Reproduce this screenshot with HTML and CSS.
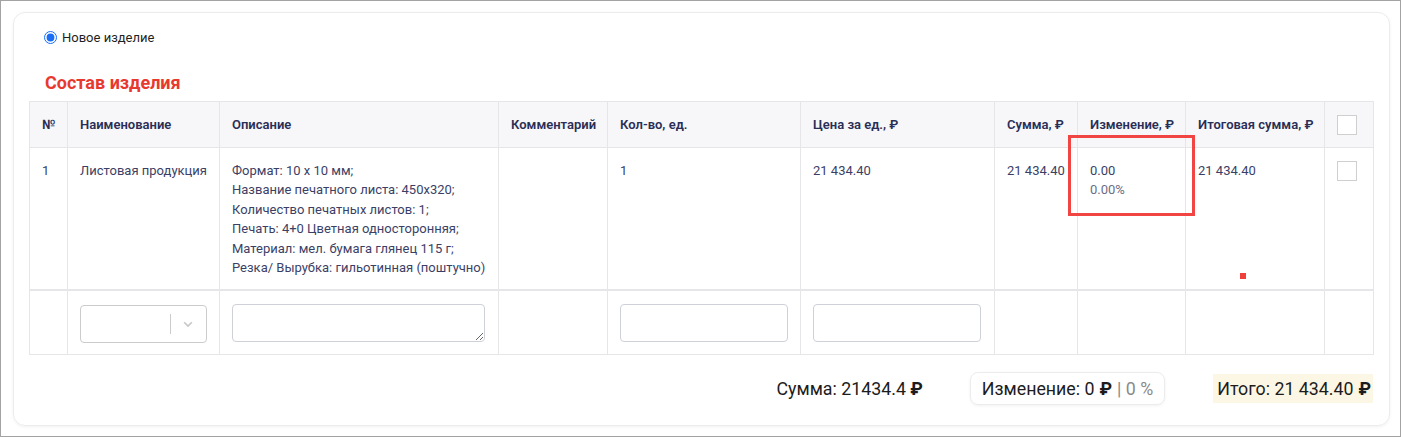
FILE: index.html
```html
<!DOCTYPE html>
<html lang="ru">
<head>
<meta charset="utf-8">
<title>Состав изделия</title>
<link rel="stylesheet" href="styles.css">
</head>
<body>
<div class="frame">
  <div class="card">
    <label class="radio-row"><input type="radio" name="kind" checked> <span>Новое изделие</span></label>
    <h2 class="title">Состав изделия</h2>
    <div class="table-wrap">
      <table class="items">
        <colgroup>
          <col class="c-num"><col class="c-name"><col class="c-desc"><col class="c-comment"><col class="c-qty"><col class="c-price"><col class="c-sum"><col class="c-change"><col class="c-total"><col class="c-check">
        </colgroup>
        <thead>
          <tr>
            <th>№</th>
            <th>Наименование</th>
            <th>Описание</th>
            <th>Комментарий</th>
            <th>Кол-во, ед.</th>
            <th>Цена за ед., ₽</th>
            <th>Сумма, ₽</th>
            <th>Изменение, ₽</th>
            <th>Итоговая сумма, ₽</th>
            <th><span class="checkbox"></span></th>
          </tr>
        </thead>
        <tbody>
          <tr class="data-row">
            <td>1</td>
            <td>Листовая продукция</td>
            <td class="desc">Формат: 10 х 10 мм;<br>Название печатного листа: 450x320;<br>Количество печатных листов: 1;<br>Печать: 4+0 Цветная односторонняя;<br>Материал: мел. бумага глянец 115 г;<br>Резка/ Вырубка: гильотинная (поштучно)</td>
            <td></td>
            <td>1</td>
            <td>21 434.40</td>
            <td>21 434.40</td>
            <td class="change"><div>0.00</div><div class="pct">0.00%</div></td>
            <td class="total-cell">21 434.40<span class="dot"></span></td>
            <td><span class="checkbox"></span></td>
          </tr>
          <tr class="input-row">
            <td></td>
            <td>
              <div class="select">
                <span class="select-value"></span>
                <span class="select-sep"></span>
                <svg class="chev" width="14" height="14" viewBox="0 0 20 20"><path d="M4.5 7.5 L10 13 L15.5 7.5" fill="none" stroke="#c8c8c8" stroke-width="2.4"/></svg>
              </div>
            </td>
            <td><textarea class="area"></textarea></td>
            <td></td>
            <td><input class="field" type="text"></td>
            <td><input class="field" type="text"></td>
            <td></td>
            <td></td>
            <td></td>
            <td></td>
          </tr>
        </tbody>
      </table>
      <div class="highlight"></div>
    </div>
    <div class="footer">
      <div class="sum">Сумма: 21434.4 <b>₽</b></div>
      <div class="chip">Изменение: 0 <b>₽</b> <span class="muted">| 0 %</span></div>
      <div class="grand">Итого: 21 434.40 <b>₽</b></div>
    </div>
  </div>
</div>
</body>
</html>
```
FILE: styles.css
```css
* { box-sizing: border-box; }
html, body { margin: 0; padding: 0; background: #fff; }
body { font-family: Roboto, "Noto Sans", Arial, sans-serif; }
.frame {
  width: 1401px; height: 437px;
  border: 1px solid #a3a3a3;
  background: #fff;
  padding: 11px 10px 0 12px;
}
.card {
  height: 414px;
  border: 1px solid #ececec;
  border-radius: 12px;
  box-shadow: 0 1px 3px rgba(0,0,0,0.06);
  padding: 15px 15px 0 15px;
}
.radio-row {
  display: flex; align-items: center; gap: 5px;
  font-size: 13px; color: #1f1f1f;
  padding-left: 15px;
  height: 19px;
}
.radio-row input { margin: 0; width: 13px; height: 13px; accent-color: #1a6ef5; }
.title {
  margin: 24px 0 0 16px;
  font-size: 18px; font-weight: 700; color: #e8392f;
  line-height: 24px; height: 24px;
}
.table-wrap { position: relative; margin-top: 6px; }
.items {
  width: 1344px;
  table-layout: fixed;
  border-collapse: collapse;
  font-size: 13px;
  color: #3b3f66;
}
.c-num { width: 38px; } .c-name { width: 152px; } .c-desc { width: 279px; }
.c-comment { width: 109px; } .c-qty { width: 193px; } .c-price { width: 194px; }
.c-sum { width: 83px; } .c-change { width: 108px; } .c-total { width: 139px; }
.c-check { width: 49px; }
.items th, .items td { border: 1px solid #e6e6e8; padding: 0 12px; text-align: left; vertical-align: top; }
.items th {
  background: #f7f7f9; height: 46px; vertical-align: middle;
  font-weight: 600; color: #2a2e56; white-space: nowrap;
}
.data-row td { padding-top: 13px; padding-bottom: 12px; line-height: 19.4px; }
.data-row td { border-bottom: 2px solid #e6e6e8; }
.desc { white-space: nowrap; }
.change .pct { color: #6b6e86; }
.total-cell { position: relative; }
.dot { position: absolute; left: 54px; top: 125px; width: 6px; height: 6px; background: #f0403b; }
.checkbox { display: block; width: 20px; height: 20px; border: 1px solid #cfcfcf; background: #fff; }
.input-row td { height: 64px; vertical-align: top; padding-top: 13px; }
.select {
  display: flex; align-items: center;
  width: 127px; height: 38px;
  border: 1px solid #cccccc; border-radius: 4px; background: #fff;
  margin-top: 1px;
}
.select-value { flex: 1; }
.select-sep { width: 1px; height: 20px; background: #cccccc; }
.chev { margin: 0 11px 0 10px; }
.area, .field {
  display: block; width: 100%; height: 38px; margin: 0;
  border: 1px solid #ced1d8; border-radius: 4px; background: #fff;
  font: inherit; resize: vertical;
}
.area { width: 253px; }
.field { width: 168px; }
.highlight {
  position: absolute; left: 1039px; top: 34px; width: 127px; height: 81px;
  border: 3px solid #f04542;
}
.footer {
  display: flex; justify-content: flex-end; align-items: center;
  width: 1344px; margin-top: 17px;
  font-size: 17.8px; color: #1c1c1c;
}
.footer b { font-weight: 700; }
.sum { margin-right: 47px; }
.chip {
  height: 33px; padding: 0 11px;
  display: flex; align-items: center; gap: 5px;
  border: 1px solid #ececec; border-radius: 8px;
  box-shadow: 0 1px 3px rgba(0,0,0,0.06);
  margin-right: 48px;
}
.chip .muted { color: #8a8a8a; }
.grand {
  background: #fcf7e5; height: 29px; padding: 0 2px 0 4px;
  display: flex; align-items: center; gap: 5px;
}
```
